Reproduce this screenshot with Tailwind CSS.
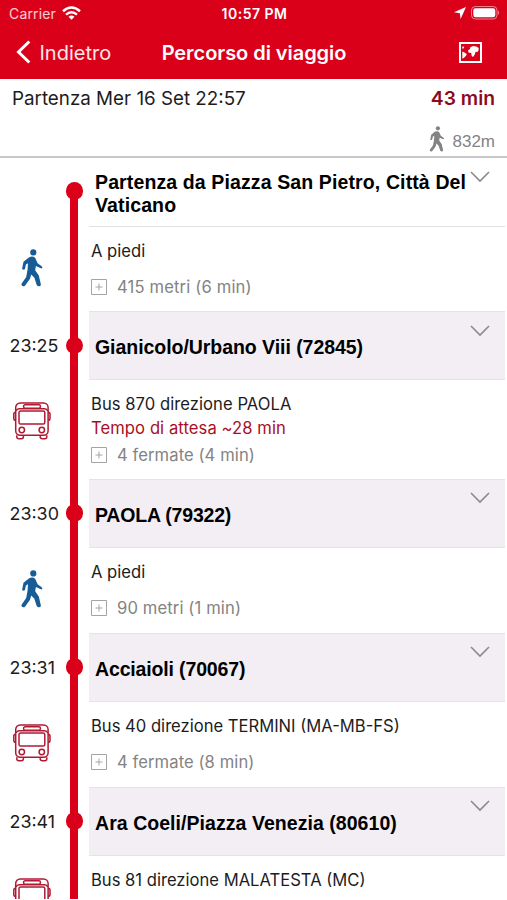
<!DOCTYPE html>
<html lang="it">
<head>
<meta charset="utf-8">
<title>Percorso di viaggio</title>
<script src="https://cdn.jsdelivr.net/npm/@tailwindcss/browser@4"></script>
</head>
<body class="bg-white">
<svg class="hidden">
  <symbol id="walk" viewBox="0 0 22 38">
    <circle cx="12.3" cy="3.4" r="3.1"/>
    <path d="M8.2 8.2 Q12 6.600 14.300 9 L16.600 14.200 L21 17.400 Q22 18.800 20.400 19.500 L14.900 17 L14.200 21.200 L17.800 26.400 L19.900 35.400 Q19.800 37.400 17.600 37.300 Q16 37.200 15.500 35.600 L13.400 28.700 L10.200 25.400 L9 29.800 L4.200 36.400 Q2.400 38 .8 36.600 Q0 35.400 .7 34.400 L5.200 28 L6.600 20.400 L7 14.200 L4.900 15.600 L3.900 20 Q2.400 21.400 1.100 19.700 L2.500 12.800 Z"/>
  </symbol>
  <symbol id="bus" viewBox="0 0 38 38">
    <g fill="none" stroke="currentColor" stroke-width="1.500">
      <rect x="2.700" y="1" width="32.400" height="32.200" rx="4.500"/>
      <rect x="10.500" y="2.800" width="17" height="3.400" rx="1.700"/>
      <rect x="6" y="9" width="25.800" height="13" rx="1.600"/>
      <circle cx="8.800" cy="28" r="2.700"/>
      <circle cx="28.800" cy="28" r="2.700"/>
      <path d="M3.800 33.200v1.600q0 2 2.200 2h2.400q2 0 2-2v-1.600M27.200 33.200v1.600q0 2 2.200 2h2.400q2 0 2-2v-1.600"/>
      <path d="M2.700 10.200Q.8 10.200.8 12v4.400q0 1.800 1.900 1.800M35.100 10.200q1.900 0 1.900 1.800v4.400q0 1.800-1.900 1.800M3 9Q4 6.800 6 6.800h25.600q2.200 0 3.200 2.200"/>
    </g>
  </symbol>
  <symbol id="chev" viewBox="0 0 20 12"><path d="M1 1l9 9 9-9" fill="none" stroke="#8c8a8e" stroke-width="1.600"/></symbol>
  <symbol id="plus" viewBox="0 0 16 16"><path d="M.5.5h15v15H.5zM4.500 8h7M8 4.500v7" fill="none" stroke="#a4a4a4" stroke-width="1"/></symbol>
</svg>

<div class="w-[507px] h-[899px] overflow-hidden flex flex-col font-[Inter,sans-serif] text-[#1c1c1e] whitespace-nowrap">
  <header class="h-[79px] shrink-0 bg-[#da0019] text-white">
    <div class="h-[27px] grid grid-cols-[1fr_auto_1fr] items-center pl-[9px] pr-[7px] text-[14px] leading-none">
      <div class="flex items-center gap-[6px] text-white/80">
        <span class="tracking-[0.150px]">Carrier</span>
        <svg class="w-[19px] h-[14px] -mt-[2px]" viewBox="0 0 19 14" fill="none" stroke="white" stroke-width="2.500"><path d="M1 5.200q8.500-7.400 17 0M4 8.600q5.500-4.600 11 0"/><path d="M9.500 13.700L6.500 10.800q3-2.500 6 0z" fill="white" stroke="none"/></svg>
      </div>
      <span class="font-semibold tracking-[0.5px]">10:57 PM</span>
      <div class="flex items-center justify-end gap-[5px] -mt-px">
        <svg class="w-[12px] h-[12px]" viewBox="0 0 12 12"><path d="M12 0L6.600 12 5.800 6.300 0 5.300z" fill="white"/></svg>
        <svg class="w-[29px] h-[14px]" viewBox="0 0 29 14"><rect x=".5" y=".5" width="25.500" height="12.500" rx="3.800" fill="none" stroke="white" stroke-opacity=".5"/><rect x="2.300" y="2.200" width="22" height="9" rx="2.200" fill="white"/><path d="M27 4.500q2 2.200 0 4.500z" fill="white" fill-opacity=".6"/></svg>
      </div>
    </div>
    <div class="h-[52px] grid grid-cols-[1fr_auto_1fr] items-center px-[16px]">
      <div class="flex items-center gap-[9px] text-[20px] text-white/90">
        <svg class="w-[15px] h-[24px] -mt-[2px]" viewBox="0 0 15 24"><path d="M13.300 1.500L2.500 12l10.800 10.500" fill="none" stroke="white" stroke-width="3"/></svg>
        <span class="-ml-[0.500px]">Indietro</span>
      </div>
      <span class="text-[20px] font-semibold -mt-px tracking-[-0.050px] pl-px">Percorso di viaggio</span>
      <svg class="w-[23px] h-[21px] justify-self-end mr-[9px] -mt-[2px]" viewBox="0 0 23 21"><rect x="1" y="1" width="21" height="19" fill="none" stroke="white" stroke-width="2"/><path d="M3.300 4.500l2 .3-.5 1.500-1.500.5zM3.300 9.500l1.700.8 2.800 1.800-.8 1.700-2.200 2.200-1.500.6zM9 8.500l2-1.500.3-1.700 2.700-1.300 3.200.6 2.500 1.400-.3 2.800-1.400 1.400-1.300-.8-.9 3-1.800 2.600-1.400-1.200-.3-2.800-2.800-.5z" fill="white"/></svg>
    </div>
  </header>

  <section class="h-[79px] shrink-0 border-b-2 border-[#c8c8ca] px-3 flex justify-between">
    <span class="text-[18.800px] leading-[39px]">Partenza Mer 16 Set 22:57</span>
    <div class="flex flex-col items-end">
      <span class="text-[19.300px] leading-[39px] font-semibold text-[#8c0a1e]">43 min</span>
      <div class="flex items-center gap-[7px] mt-[7px] text-[#838383]">
        <svg class="w-[16px] h-[26px] -mt-[6px]" fill="currentColor"><use href="#walk"/></svg>
        <span class="font-['Liberation_Sans',sans-serif] text-[17px] leading-[34px]">832m</span>
      </div>
    </div>
  </section>

  <main class="relative w-[507px] pr-[2px]">
    <div class="absolute left-[70.300px] top-[33px] w-[7.700px] h-[740px] bg-[#da0019]"></div>

    <div class="flex h-[69px]">
      <div class="w-[66px]"></div>
      <div class="relative w-[23px] pt-[24px]"><div class="size-[17.500px] -ml-[0.500px] rounded-full bg-[#da0019]"></div></div>
      <div class="flex-1 border-b border-[#e2e1e4] flex justify-between pl-[6px] pr-[15px]">
        <h2 class="font-['Liberation_Sans',sans-serif] font-bold text-[19.500px] leading-[23px] tracking-[0.120px] text-black pt-[13px]">Partenza da Piazza San Pietro, Città Del<br>Vaticano</h2>
        <svg class="w-[20px] h-[12px] mt-[13px] shrink-0"><use href="#chev"/></svg>
      </div>
    </div>

    <div class="flex h-[84px] text-[16.600px]">
      <div class="w-[89px] pl-[20.500px] pt-[22px] text-[#175b97]"><svg class="w-[22px] h-[38px]" fill="currentColor"><use href="#walk"/></svg></div>
      <div class="flex-1 pl-[2px] pt-[12px]">
        <p class="leading-[24px]">A piedi</p>
        <p class="leading-[24px] mt-[12px] flex items-center gap-[10px] text-[#838383] tracking-[0.150px]"><svg class="size-[16px]"><use href="#plus"/></svg>415 metri (6 min)</p>
      </div>
    </div>

    <div class="flex h-[69px]">
      <div class="w-[66px] pl-[9.500px] pt-[2px] flex items-center text-[17.900px]">23:25</div>
      <div class="relative w-[23px] pt-[25.500px]"><div class="size-[17.500px] -ml-[0.500px] rounded-full bg-[#da0019]"></div></div>
      <div class="flex-1 bg-[#f2eef3] border-y border-[#e6e3e7] flex justify-between pl-[6px] pr-[15px]">
        <h2 class="font-['Liberation_Sans',sans-serif] font-bold text-[19.500px] leading-[71px] tracking-[-0.050px] text-black">Gianicolo/Urbano Viii (72845)</h2>
        <svg class="w-[20px] h-[12px] mt-[13px] shrink-0"><use href="#chev"/></svg>
      </div>
    </div>

    <div class="flex h-[99px] text-[16.600px]">
      <div class="w-[89px] pl-[12.500px] pt-[22px] text-[#ae1a34]"><svg class="w-[38px] h-[38px]"><use href="#bus"/></svg></div>
      <div class="flex-1 pl-[2px] pt-[12px]">
        <p class="leading-[24px] tracking-[0.050px]">Bus 870 direzione PAOLA</p>
        <p class="leading-[24px] tracking-[0.080px] text-[#a80f26]">Tempo di attesa ~28 min</p>
        <p class="leading-[24px] mt-[3px] flex items-center gap-[10px] text-[#838383] tracking-[0.080px]"><svg class="size-[16px]"><use href="#plus"/></svg>4 fermate (4 min)</p>
      </div>
    </div>

    <div class="flex h-[69px]">
      <div class="w-[66px] pl-[9.500px] pt-[1px] flex items-center text-[17.900px]">23:30</div>
      <div class="relative w-[23px] pt-[25px]"><div class="size-[17.500px] -ml-[0.500px] rounded-full bg-[#da0019]"></div></div>
      <div class="flex-1 bg-[#f2eef3] border-y border-[#e6e3e7] flex justify-between pl-[6px] pr-[15px]">
        <h2 class="font-['Liberation_Sans',sans-serif] font-bold text-[19.500px] leading-[70px] tracking-[-0.200px] text-black">PAOLA (79322)</h2>
        <svg class="w-[20px] h-[12px] mt-[12px] shrink-0"><use href="#chev"/></svg>
      </div>
    </div>

    <div class="flex h-[85px] text-[16.600px]">
      <div class="w-[89px] pl-[20.500px] pt-[21.500px] text-[#175b97]"><svg class="w-[22px] h-[38px]" fill="currentColor"><use href="#walk"/></svg></div>
      <div class="flex-1 pl-[2px] pt-[12px]">
        <p class="leading-[24px]">A piedi</p>
        <p class="leading-[24px] mt-[12px] flex items-center gap-[10px] text-[#838383] tracking-[0.120px]"><svg class="size-[16px]"><use href="#plus"/></svg>90 metri (1 min)</p>
      </div>
    </div>

    <div class="flex h-[69px]">
      <div class="w-[66px] pl-[9.500px] pt-[1px] flex items-center text-[17.900px]">23:31</div>
      <div class="relative w-[23px] pt-[25px]"><div class="size-[17.500px] -ml-[0.500px] rounded-full bg-[#da0019]"></div></div>
      <div class="flex-1 bg-[#f2eef3] border-y border-[#e6e3e7] flex justify-between pl-[6px] pr-[15px]">
        <h2 class="font-['Liberation_Sans',sans-serif] font-bold text-[19.500px] leading-[70px] tracking-[-0.150px] text-black">Acciaioli (70067)</h2>
        <svg class="w-[20px] h-[12px] mt-[12px] shrink-0"><use href="#chev"/></svg>
      </div>
    </div>

    <div class="flex h-[85px] text-[16.600px]">
      <div class="w-[89px] pl-[12.500px] pt-[21.500px] text-[#ae1a34]"><svg class="w-[38px] h-[38px]"><use href="#bus"/></svg></div>
      <div class="flex-1 pl-[2px] pt-[12px]">
        <p class="leading-[24px]">Bus 40 direzione TERMINI (MA-MB-FS)</p>
        <p class="leading-[24px] mt-[12px] flex items-center gap-[10px] text-[#838383] tracking-[0.080px]"><svg class="size-[16px]"><use href="#plus"/></svg>4 fermate (8 min)</p>
      </div>
    </div>

    <div class="flex h-[69px]">
      <div class="w-[66px] pl-[9.500px] pt-[1px] flex items-center text-[17.900px]">23:41</div>
      <div class="relative w-[23px] pt-[25px]"><div class="size-[17.500px] -ml-[0.500px] rounded-full bg-[#da0019]"></div></div>
      <div class="flex-1 bg-[#f2eef3] border-y border-[#e6e3e7] flex justify-between pl-[6px] pr-[15px]">
        <h2 class="font-['Liberation_Sans',sans-serif] font-bold text-[19.500px] leading-[70px] tracking-[0.050px] text-black">Ara Coeli/Piazza Venezia (80610)</h2>
        <svg class="w-[20px] h-[12px] mt-[12px] shrink-0"><use href="#chev"/></svg>
      </div>
    </div>

    <div class="flex h-[43px] overflow-hidden text-[16.600px]">
      <div class="w-[89px] pl-[12.500px] pt-[21.500px] text-[#ae1a34]"><svg class="w-[38px] h-[38px]"><use href="#bus"/></svg></div>
      <div class="flex-1 pl-[2px] pt-[12px]">
        <p class="leading-[24px]">Bus 81 direzione MALATESTA (MC)</p>
      </div>
    </div>
  </main>
</div>
</body>
</html>
